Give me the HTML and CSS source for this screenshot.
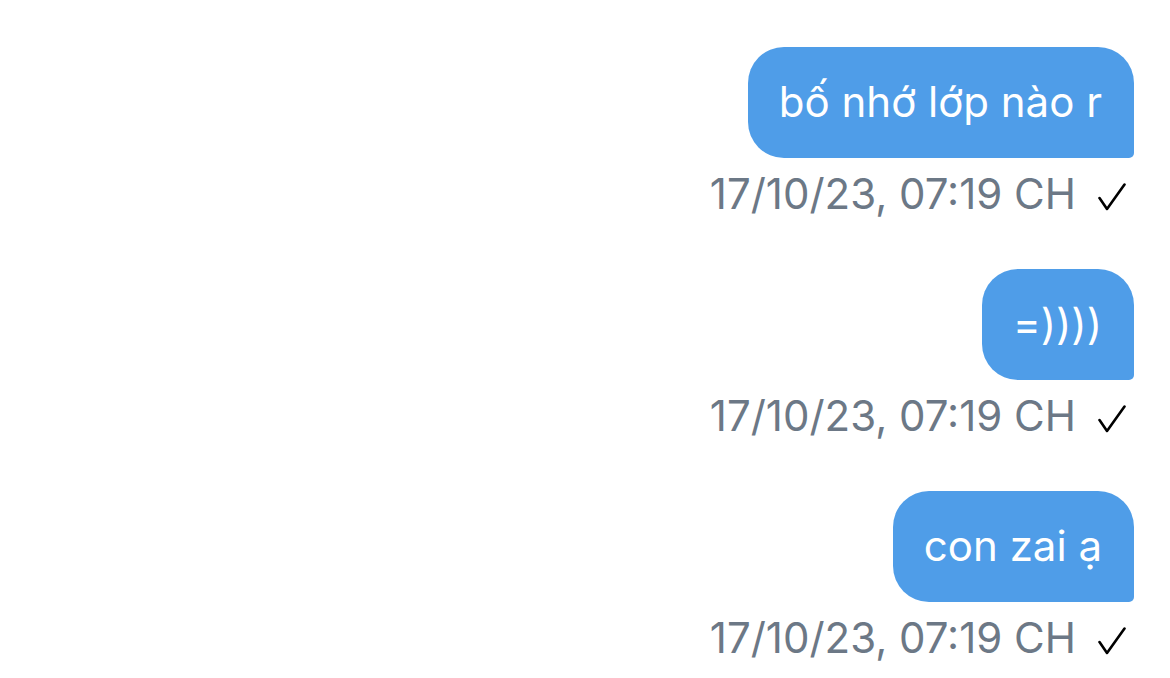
FILE: index.html
```html
<!DOCTYPE html>
<html lang="vi">
<head>
  <meta charset="UTF-8" />
  <title>Chat</title>
  <link rel="stylesheet" href="styles.css">
</head>
<body>
  <div class="thread">

    <div class="msg">
      <div class="bubble">bố nhớ lớp nào r</div>
      <div class="meta">
        <span class="time">17/10/23, 07:19 CH</span>
        <svg class="tick" viewBox="0 0 28 28" width="28" height="28"><path d="M1.5 15 L9 26 L26.5 1.5" fill="none" stroke="#000" stroke-width="2.6" stroke-linecap="round" stroke-linejoin="round"/></svg>
      </div>
    </div>

    <div class="msg">
      <div class="bubble">=))))</div>
      <div class="meta">
        <span class="time">17/10/23, 07:19 CH</span>
        <svg class="tick" viewBox="0 0 28 28" width="28" height="28"><path d="M1.5 15 L9 26 L26.5 1.5" fill="none" stroke="#000" stroke-width="2.6" stroke-linecap="round" stroke-linejoin="round"/></svg>
      </div>
    </div>

    <div class="msg">
      <div class="bubble">con zai ạ</div>
      <div class="meta">
        <span class="time">17/10/23, 07:19 CH</span>
        <svg class="tick" viewBox="0 0 28 28" width="28" height="28"><path d="M1.5 15 L9 26 L26.5 1.5" fill="none" stroke="#000" stroke-width="2.6" stroke-linecap="round" stroke-linejoin="round"/></svg>
      </div>
    </div>

  </div>
</body>
</html>
```

FILE: styles.css
```css
body {
  margin: 0;
  font-family: Inter, "Noto Sans", sans-serif;
  background: #fff;
  height: 100vh;
  overflow: hidden;
}

.thread {
  display: flex;
  flex-direction: column;
  align-items: flex-end;
  gap: 50px;
  padding: 47px 36px 0 0;
}

.msg {
  display: flex;
  flex-direction: column;
  align-items: flex-end;
  gap: 11px;
}

.bubble {
  background: #4f9de8;
  color: #fff;
  font-size: 42px;
  line-height: 50px;
  padding: 30px 32px 31px 31px;
  border-radius: 36px 36px 5px 36px;
}

.meta {
  display: flex;
  align-items: flex-start;
  gap: 22px;
  padding-right: 8px;
}

.time {
  color: #6c7886;
  font-size: 42px;
  line-height: 50px;
}

.tick {
  display: block;
  margin-top: 14px;
}
```
